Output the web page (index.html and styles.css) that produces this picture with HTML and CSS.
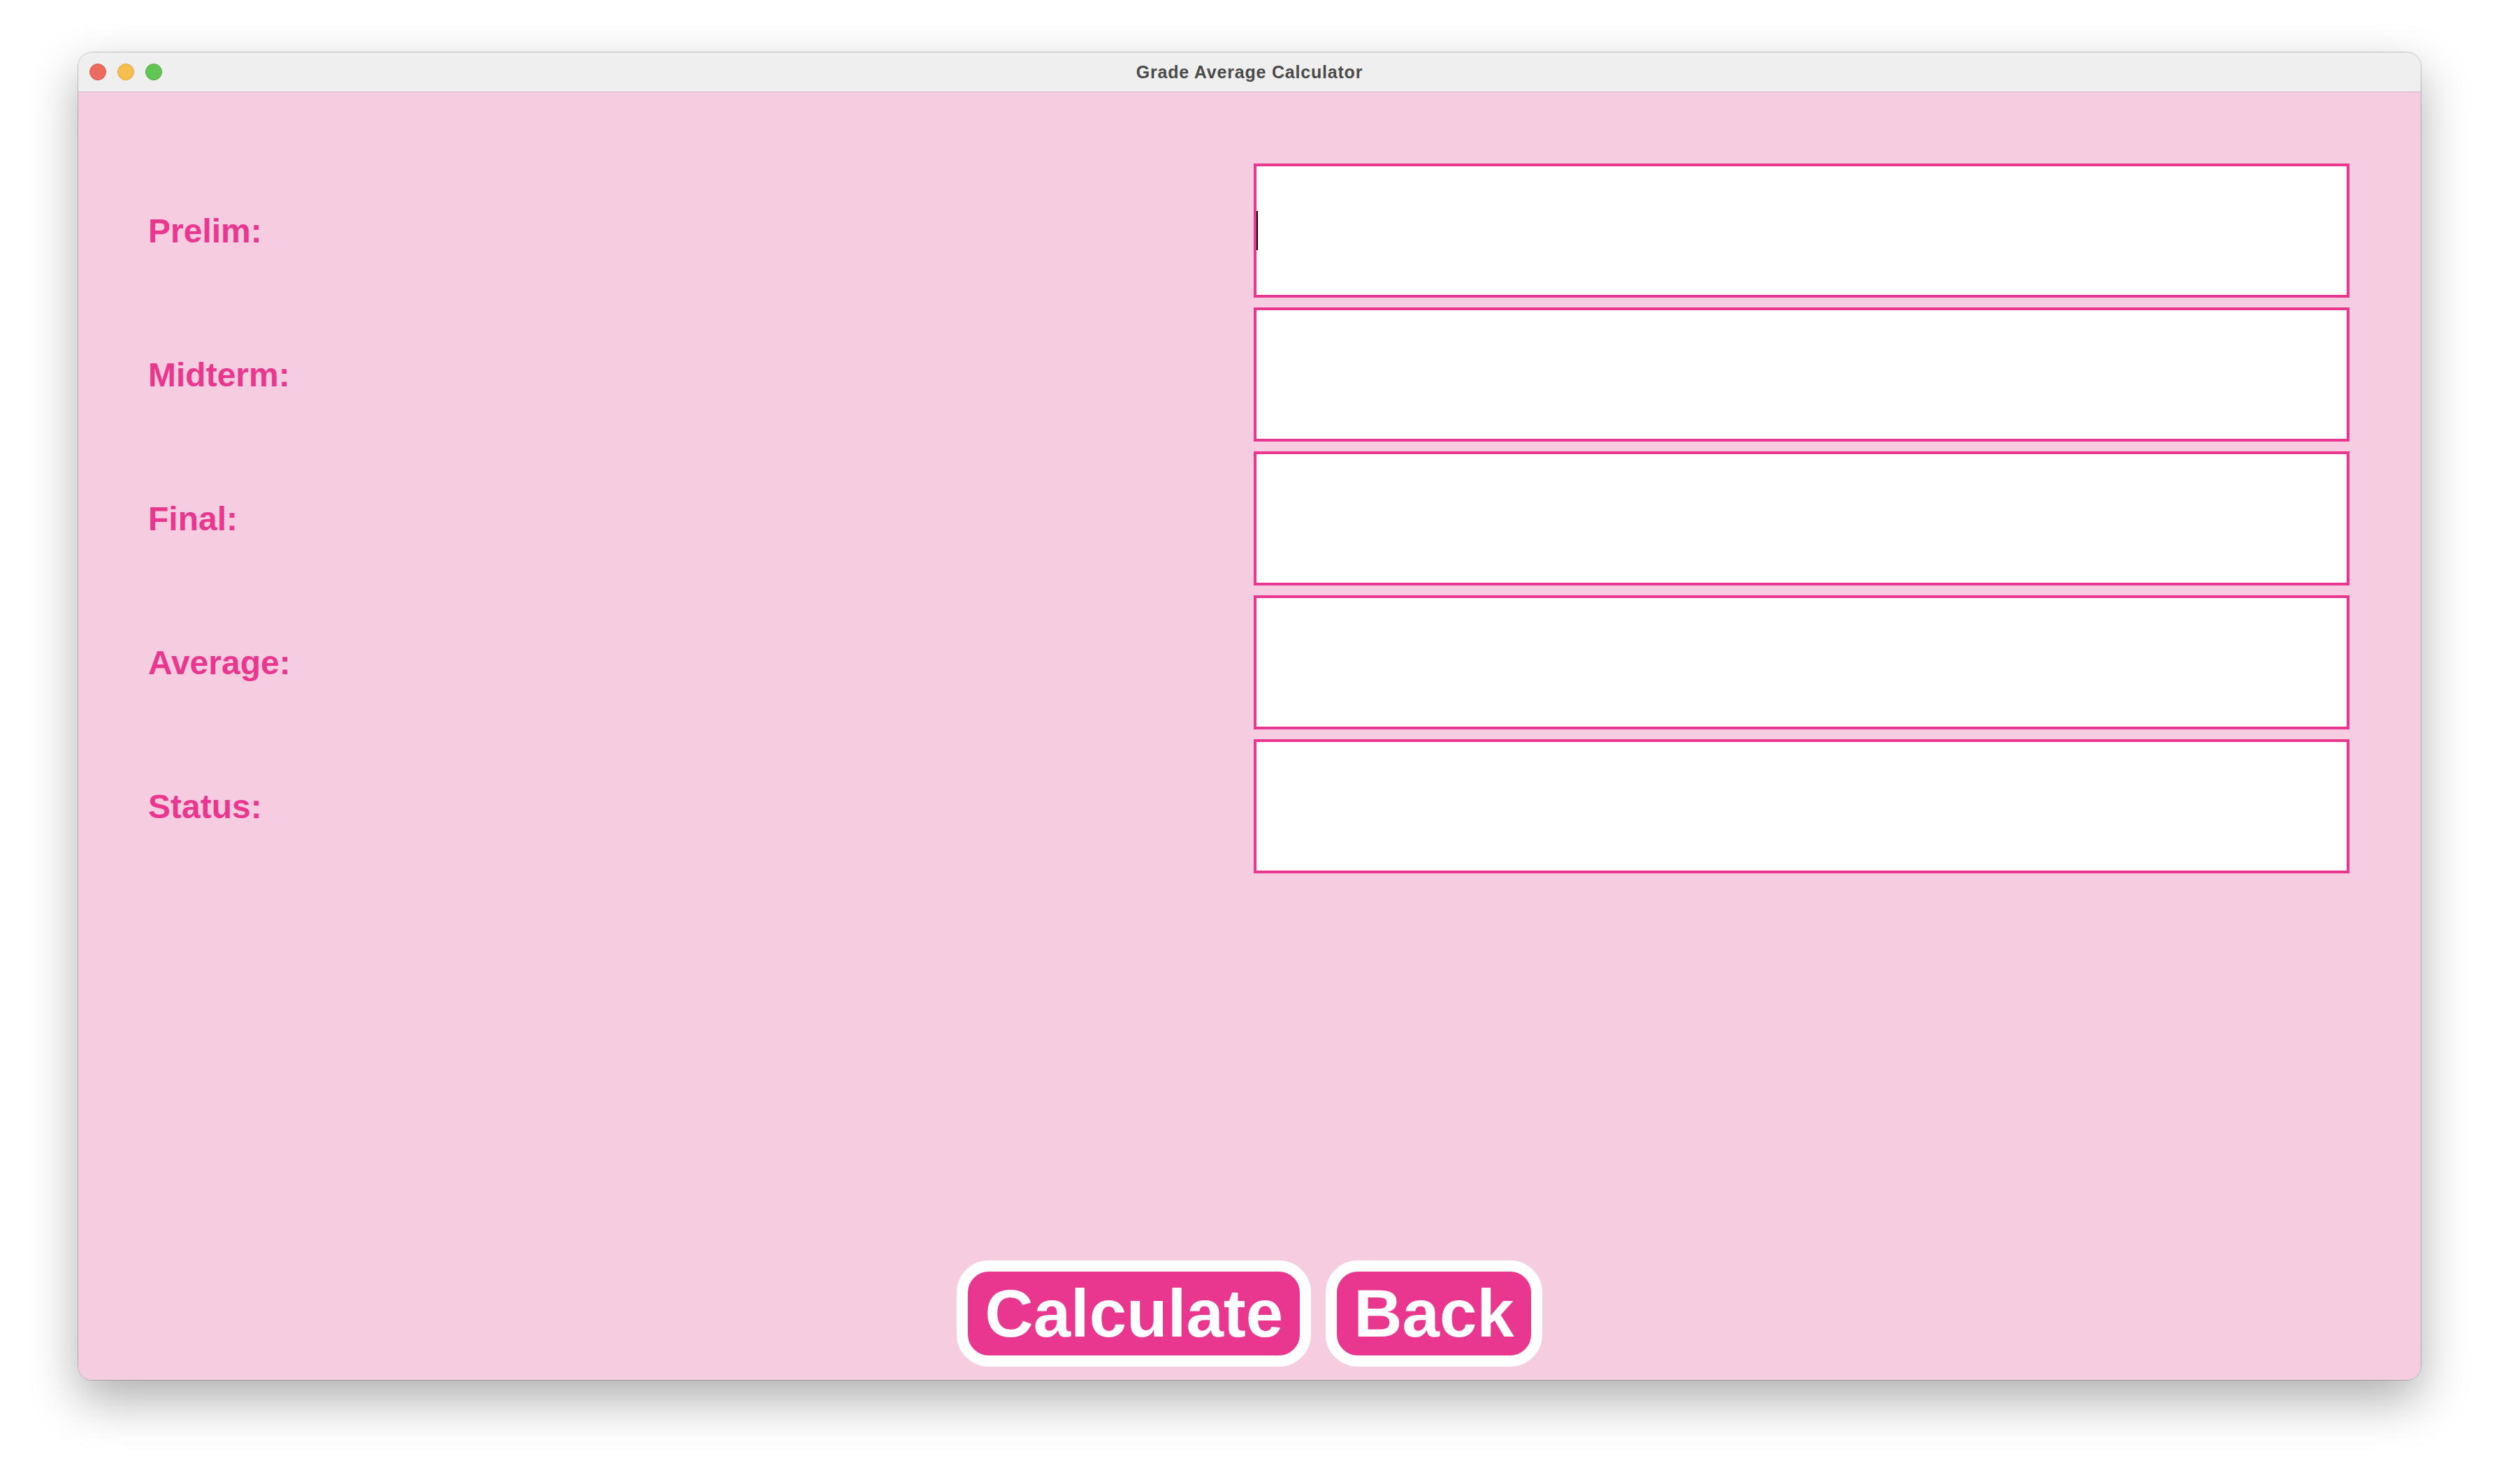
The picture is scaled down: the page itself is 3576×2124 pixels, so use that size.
FILE: index.html
```html
<!DOCTYPE html>
<html lang="en">
<head>
<meta charset="utf-8">
<title>Grade Average Calculator</title>
<link rel="stylesheet" href="styles.css">
</head>
<body>
<div class="desktop">
  <div class="window">
    <div class="titlebar">
      <div class="lights">
        <span class="light red"></span>
        <span class="light yellow"></span>
        <span class="light green"></span>
      </div>
      <div class="title">Grade Average Calculator</div>
      <div></div>
    </div>
    <div class="content">
      <div class="form">
        <div class="label">Prelim:</div>
        <div class="field"><span class="caret"></span></div>
        <div class="label">Midterm:</div>
        <div class="field"></div>
        <div class="label">Final:</div>
        <div class="field"></div>
        <div class="label">Average:</div>
        <div class="field"></div>
        <div class="label">Status:</div>
        <div class="field"></div>
      </div>
      <div class="buttons">
        <div class="btn">Calculate</div>
        <div class="btn">Back</div>
      </div>
    </div>
  </div>
</div>
</body>
</html>
```
FILE: styles.css
```css
html, body {
  margin: 0;
  padding: 0;
  background: #ffffff;
}
body {
  width: 3576px;
  height: 2124px;
  overflow: hidden;
  font-family: "Liberation Sans", Arial, sans-serif;
}
.desktop {
  padding: 75px 0 0 112px;
}
.window {
  width: 3352px;
  height: 1900px;
  border-radius: 20px;
  overflow: hidden;
  display: flex;
  flex-direction: column;
  box-shadow: 0 28px 70px rgba(0, 0, 0, 0.32), 0 0 0 1px rgba(0, 0, 0, 0.2);
}
.titlebar {
  height: 56px;
  flex: none;
  background: #efefef;
  border-bottom: 1px solid #d2b3c1;
  display: grid;
  grid-template-columns: 1fr auto 1fr;
  align-items: center;
}
.lights {
  display: flex;
  gap: 16px;
  padding-left: 16px;
}
.light {
  width: 22px;
  height: 22px;
  border-radius: 50%;
  border: 1px solid transparent;
}
.red { background: #ed6a5e; border-color: #d6574c; }
.yellow { background: #f5bf4f; border-color: #dba53e; }
.green { background: #61c554; border-color: #4fa942; }
.title {
  font-size: 25px;
  font-weight: bold;
  letter-spacing: 0.8px;
  color: #4b4b4b;
}
.content {
  flex: 1;
  background: #f6cde0;
  display: flex;
  flex-direction: column;
  padding: 102px 0 19px 0;
}
.form {
  display: grid;
  grid-template-columns: 1fr 1568px;
  grid-auto-rows: 192px;
  row-gap: 14px;
  padding: 0 102px 0 100px;
}
.label {
  align-self: center;
  font-size: 48px;
  font-weight: bold;
  color: #e9378f;
}
.field {
  background: #ffffff;
  border: 4px solid #e9378f;
  display: flex;
  align-items: center;
}
.caret {
  width: 2px;
  height: 56px;
  background: #000000;
}
.buttons {
  margin-top: auto;
  display: flex;
  justify-content: center;
  gap: 21px;
}
.btn {
  height: 120px;
  line-height: 120px;
  padding: 0 24px;
  border: 16px solid #ffffff;
  border-radius: 46px;
  background: #e9378f;
  color: #ffffff;
  font-size: 96px;
  font-weight: bold;
}
```
